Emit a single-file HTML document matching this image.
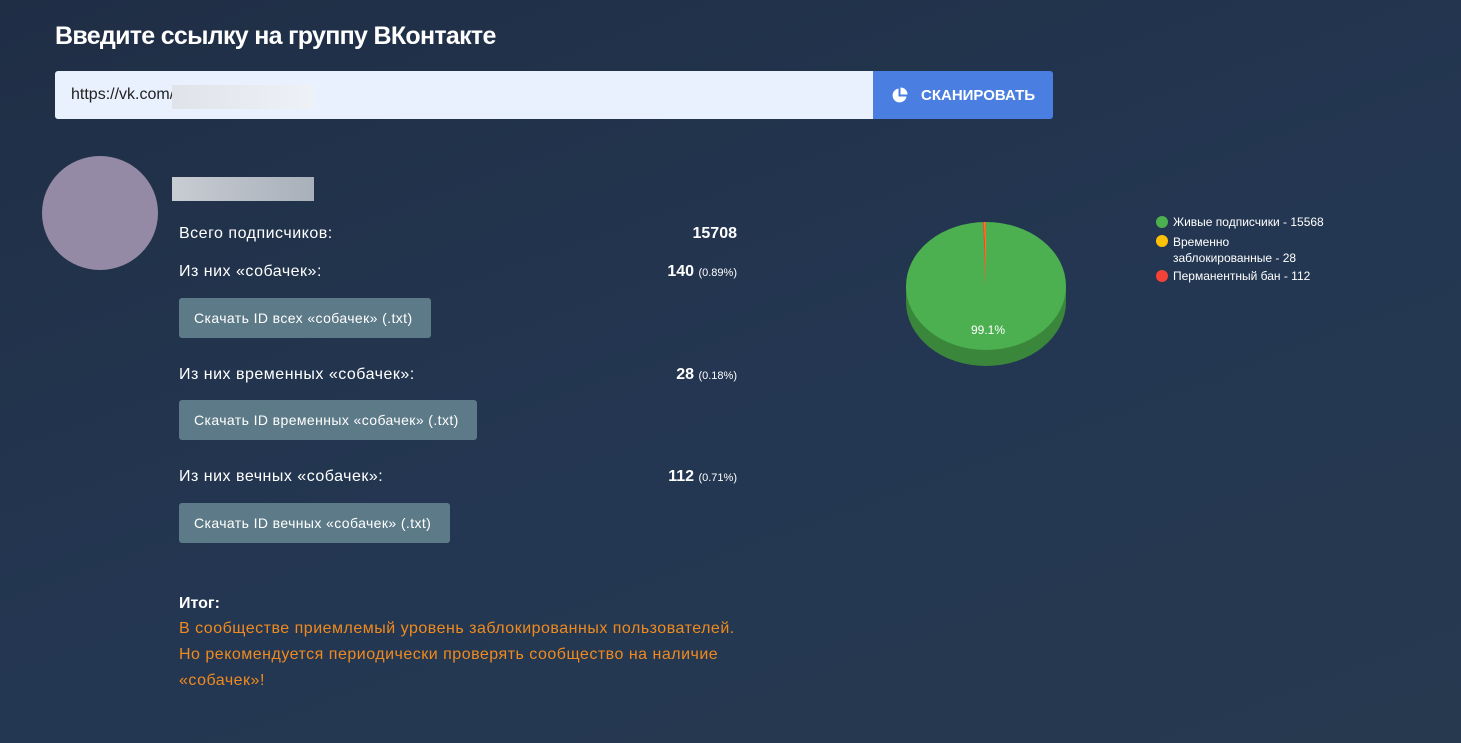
<!DOCTYPE html>
<html><head><meta charset="utf-8"><style>
html,body{margin:0;padding:0}
body{width:1461px;height:743px;overflow:hidden;position:relative;font-family:"Liberation Sans","DejaVu Sans",sans-serif;color:#fff;
background:linear-gradient(160deg,#1f2e45 0%,#243752 55%,#26394f 100%);}
.a{position:absolute}
h1{position:absolute;left:55px;top:22px;margin:0;font-size:25px;font-weight:bold;letter-spacing:-0.7px}
.inp{left:55px;top:71px;width:818px;height:48px;background:#e8f1fd;border-radius:3px 0 0 3px;color:#222;font-size:16px}
.btn{left:873px;top:71px;width:180px;height:48px;background:#4a7ee0;border-radius:0 3px 3px 0;font-weight:bold;font-size:15px}
.row{position:absolute;left:179px;width:558px;font-size:16px;letter-spacing:0.5px}
.row span.r{position:absolute;right:0;top:0;font-weight:bold;letter-spacing:0}
.row small{font-size:11px;font-weight:normal}
.dl{position:absolute;left:179px;height:40px;background:#5d7a88;border-radius:3px;font-size:14px;letter-spacing:0.4px;line-height:40px;padding:0 15px;box-sizing:border-box;white-space:nowrap}
.or{color:#f08a1e;font-size:16px;letter-spacing:0.5px;line-height:26px}
.lg{font-size:12px;position:absolute;left:1173px}
.dot{position:absolute;left:-17px;top:1px;width:12px;height:12px;border-radius:50%}
</style></head><body>
<h1>Введите ссылку на группу ВКонтакте</h1>
<div class="a inp"><span class="a" style="left:16px;top:15px">https://vk.com/</span>
<div class="a" style="left:117px;top:14px;width:142px;height:24px;background:linear-gradient(90deg,#e0e4ea,#eef2f7)"></div></div>
<div class="a btn"><svg class="a" style="left:18px;top:16px" width="17" height="17" viewBox="0 0 17 17"><path d="M7.5 1.5A7 7 0 1 0 15.5 9.5H7.5Z" fill="#fff"/><path d="M9.5 0.5V7.5H16.5A7 7 0 0 0 9.5 0.5Z" fill="#fff"/></svg><span class="a" style="left:48px;top:16px">СКАНИРОВАТЬ</span></div>

<div class="a" style="left:42px;top:156px;width:116px;height:114px;border-radius:50%;background:#958aa5"></div>
<div class="a" style="left:172px;top:177px;width:142px;height:24px;background:linear-gradient(90deg,#c8ccd3,#a8b0ba)"></div>

<div class="row" style="top:225px">Всего подписчиков:<span class="r">15708</span></div>
<div class="row" style="top:263px">Из них «собачек»:<span class="r">140 <small>(0.89%)</small></span></div>
<div class="dl" style="top:298px;width:252px">Скачать ID всех «собачек» (.txt)</div>
<div class="row" style="top:366px">Из них временных «собачек»:<span class="r">28 <small>(0.18%)</small></span></div>
<div class="dl" style="top:400px;width:298px">Скачать ID временных «собачек» (.txt)</div>
<div class="row" style="top:468px">Из них вечных «собачек»:<span class="r">112 <small>(0.71%)</small></span></div>
<div class="dl" style="top:503px;width:271px">Скачать ID вечных «собачек» (.txt)</div>

<div class="a" style="left:179px;top:595px;font-weight:bold;font-size:16px">Итог:</div>
<div class="a or" style="left:179px;top:616px;width:640px">В сообществе приемлемый уровень заблокированных пользователей.<br>Но рекомендуется периодически проверять сообщество на наличие<br>«собачек»!</div>

<svg class="a" style="left:900px;top:215px" width="175" height="160">
<path d="M6 71 L6 87 A80 64 0 0 0 166 87 L166 71 Z" fill="#3a873c"/>
<ellipse cx="86" cy="71" rx="80" ry="64" fill="#4caf50"/>
<path d="M86 71 L83 7 A80 64 0 0 1 86 7 Z" fill="#f44336"/>
<path d="M86 71 L84.5 7 L85.2 7 Z" fill="#ffc107"/>
<text x="88" y="119" font-size="12" fill="#fff" text-anchor="middle" font-family="Liberation Sans">99.1%</text>
</svg>
<div class="lg" style="top:215px"><span class="dot" style="background:#4caf50"></span>Живые подписчики - 15568</div>
<div class="lg" style="top:234px;line-height:16px"><span class="dot" style="background:#ffc107"></span>Временно<br>заблокированные - 28</div>
<div class="lg" style="top:269px"><span class="dot" style="background:#f44336"></span>Перманентный бан - 112</div>
</body></html>
